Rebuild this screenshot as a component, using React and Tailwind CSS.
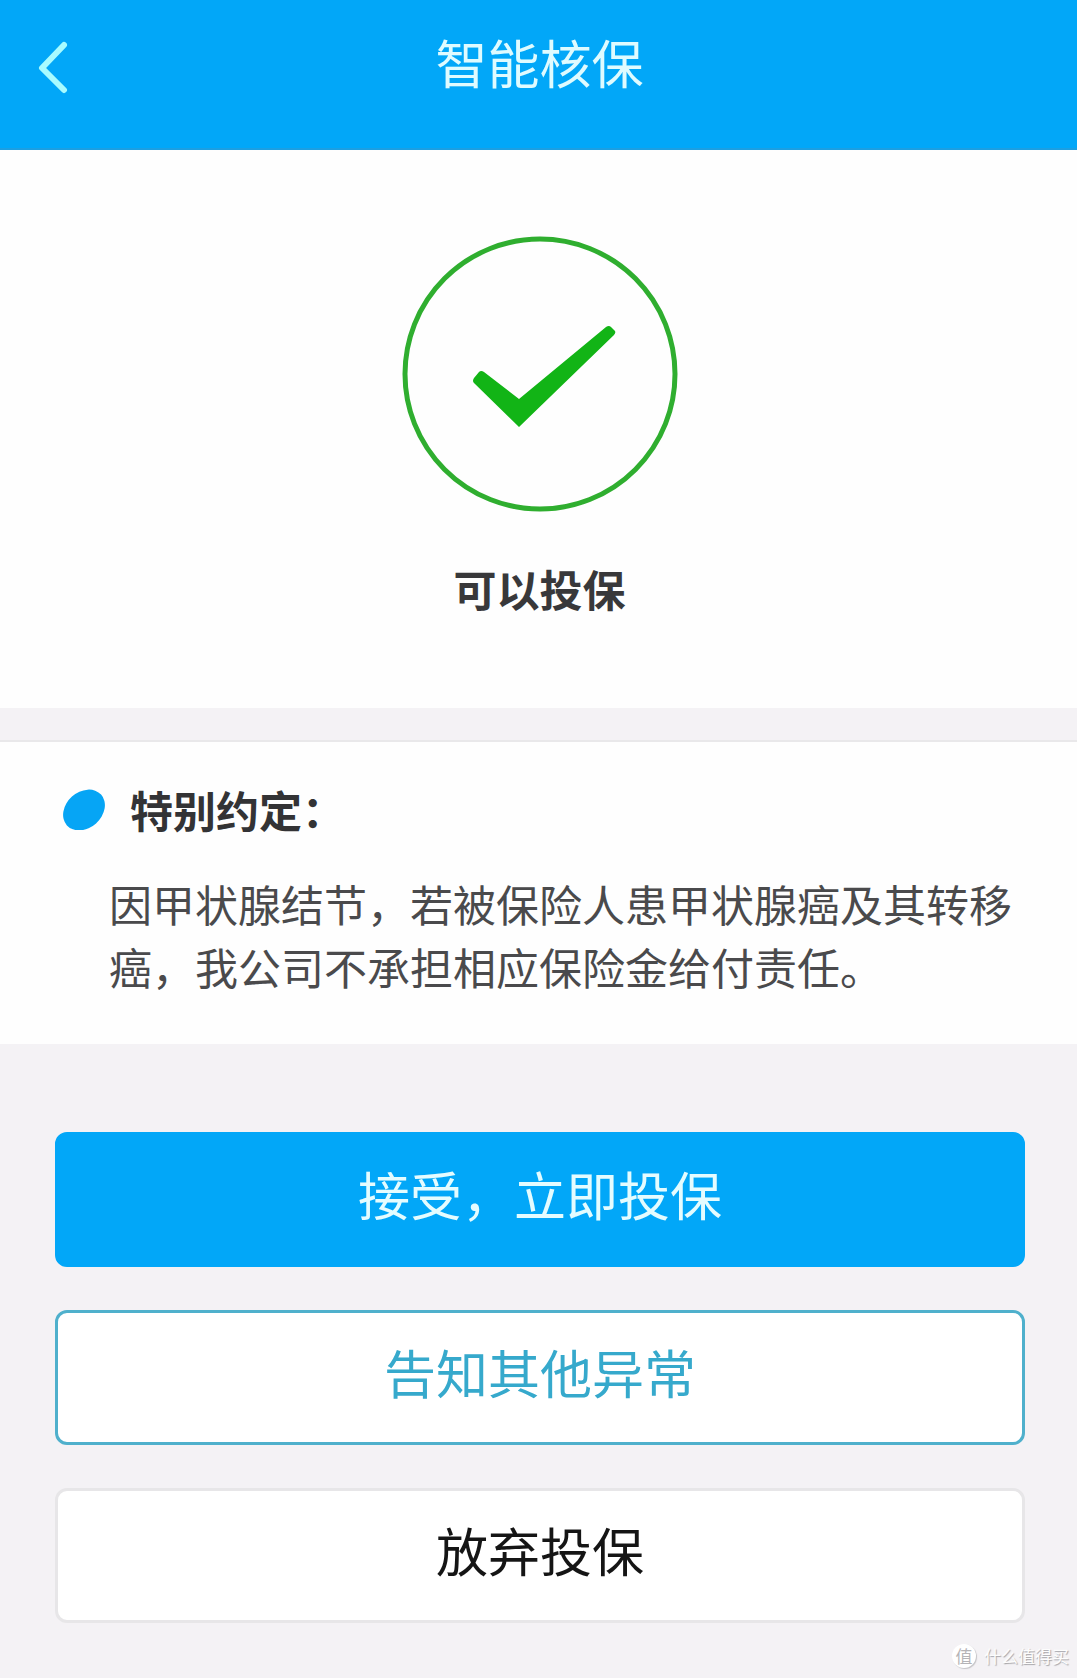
const actions = [
  {
    label: "接受，立即投保",
    style: "bg-[#02a7f8] border-[#02a7f8] text-[#e4fcff]",
  },
  {
    label: "告知其他异常",
    style: "bg-white border-[#4fb0cc] text-[#36a9cc]",
  },
  {
    label: "放弃投保",
    style: "bg-white border-[#e7e6e8] text-[#151515]",
  },
];

export default function App() {
  return (
    <div className="min-h-screen bg-white pr-[3px] font-['Noto_Sans_CJK_SC',sans-serif]">
      <div className="min-h-screen bg-[#f4f2f5] flex flex-col">
        <Header title="智能核保" />

        <main className="flex-1">
          {/* result */}
          <section className="bg-[#fefefe] flex flex-col items-center pt-[86px] pb-[88px] pl-[2px]">
            <ResultIcon />
            <h2 className="mt-11 text-[43px] leading-[64px] font-bold text-[#38383a]">
              可以投保
            </h2>
          </section>

          {/* special terms */}
          <section className="mt-8 bg-[#fefefe] border-t-2 border-[#e9e8ea] pt-9 pb-[46px] pl-[63px] pr-[44px]">
            <div className="flex items-center gap-[25px]">
              <Dot />
              <h3 className="text-[43px] leading-[62px] font-bold text-[#333335]">
                特别约定：
              </h3>
            </div>
            <p className="mt-8 pl-[46px] text-[43px] leading-[63px] text-[#4a4a4c]">
              因甲状腺结节，若被保险人患甲状腺癌及其转移癌，我公司不承担相应保险金给付责任。
            </p>
          </section>

          <div className="flex flex-col gap-[43px] pl-[55px] pr-[52px] pt-[88px]">
            {actions.map((a) => (
              <button
                key={a.label}
                type="button"
                className={`w-full rounded-xl border-[3px] pt-3.5 pb-[26px] text-[52px] leading-[89px] ${a.style}`}
              >
                {a.label}
              </button>
            ))}
          </div>
        </main>

        <Footer />
      </div>
    </div>
  );
}

function Header({ title }) {
  return (
    <header className="grid grid-cols-[1fr_auto_1fr] items-center bg-[#02a7f8] border-b-2 border-[#1c9fe2] pl-[38px] pr-9 pt-4 pb-10">
      <button type="button" aria-label="返回" className="justify-self-start pt-2.5">
        <svg width="34" height="56" viewBox="0 0 34 56" fill="none">
          <path
            d="M26 6 L4 29 L26 51"
            stroke="#a8fbff"
            strokeWidth="6"
            strokeLinecap="round"
            strokeLinejoin="round"
          />
        </svg>
      </button>
      <h1 className="text-[52px] leading-[92px] text-[#dffbff]">{title}</h1>
    </header>
  );
}

function ResultIcon() {
  return (
    <svg width="276" height="276" viewBox="0 0 276 276" fill="none" aria-hidden="true">
      <circle cx="138" cy="138" r="135" stroke="#2fae2f" strokeWidth="5" />
      <path
        d="M72 142 L77 136 Q79 134 82 136 L117 163 L204 91 Q207 89 209 91 L213 95 Q214 97 212 99 L117 191 L72 147 Q70 145 72 142 Z"
        fill="#12b416"
      />
    </svg>
  );
}

function Dot() {
  return (
    <svg width="42" height="42" viewBox="0 0 42 42" aria-hidden="true">
      <ellipse cx="21" cy="22" rx="23" ry="18" fill="#06a5f5" transform="rotate(-42 21 22)" />
    </svg>
  );
}

function Footer() {
  return (
    <footer className="flex items-center justify-end gap-2 pt-3 pb-2 pr-2 text-[#fdfdfd]">
      <span className="flex size-6 items-center justify-center rounded-full bg-white text-[17px] leading-6 text-[#b5b4b7] shadow-[1px_1px_1px_#c4c3c6]">
        值
      </span>
      <span className="text-[17px] leading-7 [text-shadow:1px_1px_1px_#a5a4a8]">
        什么值得买
      </span>
    </footer>
  );
}
